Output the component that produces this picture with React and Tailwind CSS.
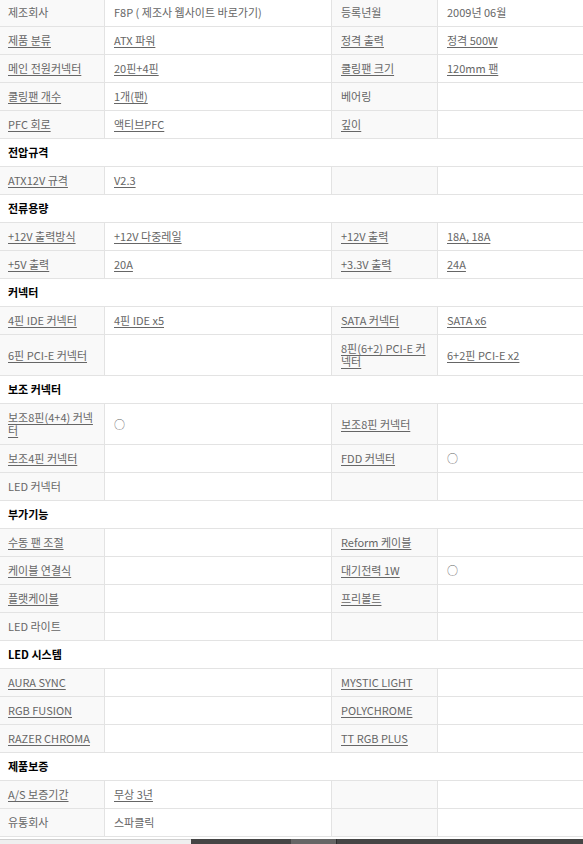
import { Fragment } from "react";

// "~" prefix = linked (underlined) text
const rows = [
  ["제조회사", "F8P ( 제조사 웹사이트 바로가기)", "등록년월", "2009년 06월"],
  ["~제품 분류", "~ATX 파워", "~정격 출력", "~정격 500W"],
  ["~메인 전원커넥터", "~20핀+4핀", "~쿨링팬 크기", "~120mm 팬"],
  ["~쿨링팬 개수", "~1개(팬)", "베어링", ""],
  ["~PFC 회로", "~액티브PFC", "~깊이", ""],
  "전압규격",
  ["~ATX12V 규격", "~V2.3", "", ""],
  "전류용량",
  ["~+12V 출력방식", "~+12V 다중레일", "~+12V 출력", "~18A, 18A"],
  ["~+5V 출력", "~20A", "~+3.3V 출력", "~24A"],
  "커넥터",
  ["~4핀 IDE 커넥터", "~4핀 IDE x5", "~SATA 커넥터", "~SATA x6"],
  ["~6핀 PCI-E 커넥터", "", "~8핀(6+2) PCI-E 커\n넥터", "~6+2핀 PCI-E x2"],
  "보조 커넥터",
  ["~보조8핀(4+4) 커넥\n터", "○", "~보조8핀 커넥터", ""],
  ["~보조4핀 커넥터", "", "~FDD 커넥터", "○"],
  ["LED 커넥터", "", "", ""],
  "부가기능",
  ["~수동 팬 조절", "", "~Reform 케이블", ""],
  ["~케이블 연결식", "", "~대기전력 1W", "○"],
  ["~플랫케이블", "", "~프리볼트", ""],
  ["LED 라이트", "", "", ""],
  "LED 시스템",
  ["~AURA SYNC", "", "~MYSTIC LIGHT", ""],
  ["~RGB FUSION", "", "~POLYCHROME", ""],
  ["~RAZER CHROMA", "", "~TT RGB PLUS", ""],
  "제품보증",
  ["~A/S 보증기간", "~무상 3년", "", ""],
  ["유통회사", "스파클릭", "", ""],
];

function Text({ v }) {
  if (!v) return null;
  if (v.startsWith("~")) {
    return <span className="underline underline-offset-2 whitespace-pre">{v.slice(1)}</span>;
  }
  return <span className="whitespace-pre">{v}</span>;
}

const cell = "flex items-center py-[7px] leading-[13px]";

export default function App() {
  return (
    <div
      className="w-[583px] bg-white text-[11px] text-[#666]"
      style={{ fontFamily: '"Noto Sans CJK KR", "Noto Sans", sans-serif' }}
    >
      <div className="-mt-px">
        {rows.map((r, i) =>
          typeof r === "string" ? (
            <div key={i} className={`${cell} border-b border-[#e3e3e3] pl-2 font-bold text-black`}>
              {r}
            </div>
          ) : (
            <div key={i} className="flex border-b border-[#e3e3e3]">
              <div className={`${cell} w-[105px] shrink-0 border-r border-[#e3e3e3] bg-[#f9f9f9] pl-2`}>
                <Text v={r[0]} />
              </div>
              <div className={`${cell} w-[227px] shrink-0 border-r border-[#e3e3e3] pl-[9px]`}>
                <Text v={r[1]} />
              </div>
              <div className={`${cell} w-[106px] shrink-0 border-r border-[#e3e3e3] bg-[#f9f9f9] pl-[9px]`}>
                <Text v={r[2]} />
              </div>
              <div className={`${cell} flex-1 pl-[9px]`}>
                <Text v={r[3]} />
              </div>
            </div>
          )
        )}
      </div>
      <div className="mt-[2px] flex h-[6px]">
        <div className="w-[191px] border-t border-[#cfcfcf] bg-[#efefef]" />
        <div className="w-[100px] bg-[#454545]" />
        <div className="w-[45px] bg-[#666]" />
        <div className="w-px bg-[#2c2c2c]" />
        <div className="flex-1 bg-[#454545]" />
      </div>
    </div>
  );
}
